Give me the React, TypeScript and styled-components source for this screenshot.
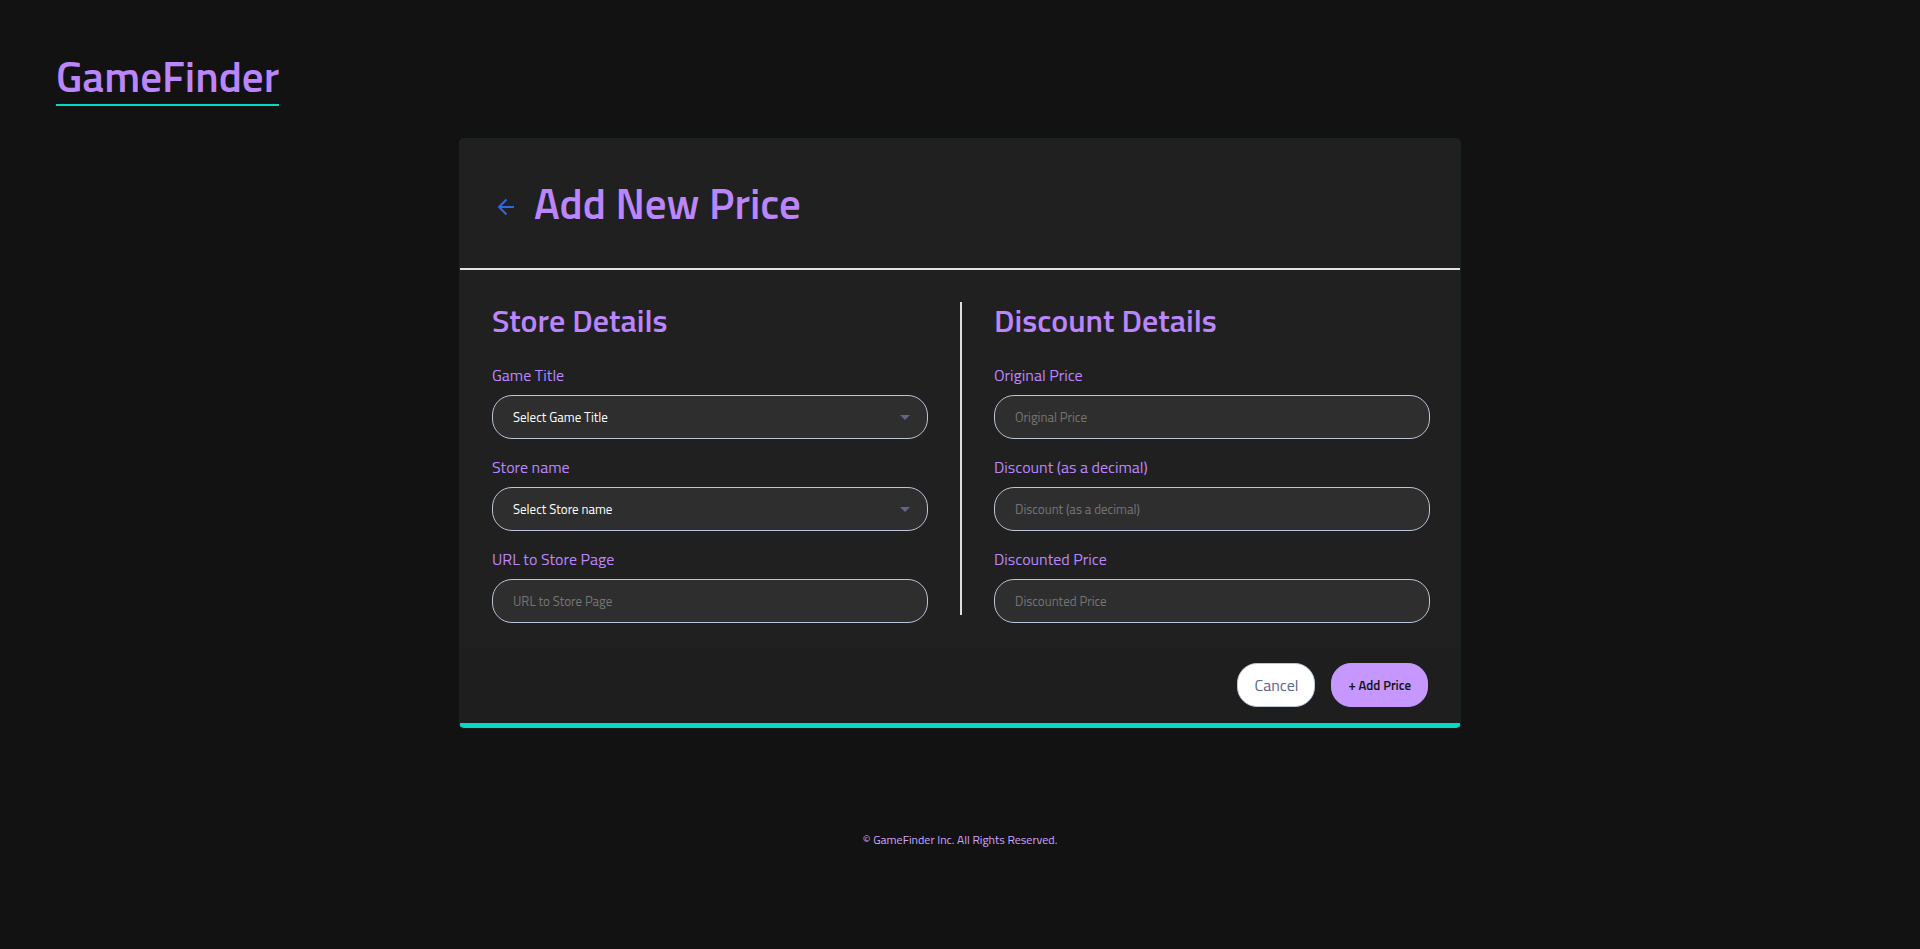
import React, { useId } from "react";
import styled, { createGlobalStyle } from "styled-components";

const GlobalStyle = createGlobalStyle`
  *, *::before, *::after { box-sizing: border-box; }
  body {
    margin: 0;
    background: #121212;
    color: #bb86fc;
    font-family: "Titillium Web", Roboto, sans-serif;
  }
  h1, h2, p { margin: 0; }
  button, input, select { font-family: inherit; }
`;

const Page = styled.div`
  display: flex;
  flex-direction: column;
  min-height: 100vh;
  padding: 48px 56px 0;
`;

const Brand = styled.a`
  align-self: flex-start;
  border-bottom: 2px solid #03dac5;
  color: #bb86fc;
  font-size: 43px;
  font-weight: 600;
  line-height: 56px;
  text-decoration: none;
`;

const Card = styled.form`
  width: 100%;
  max-width: 1002px;
  margin: 32px auto 0;
  overflow: hidden;
  border: 1px solid #1a2424;
  border-bottom: 5px solid #03dac5;
  border-radius: 5px;
  background: #202020;
`;

const CardHeader = styled.header`
  display: flex;
  align-items: center;
  gap: 16px;
  padding: 33px 36px 34px;
  border-bottom: 2px solid #dde3e6;
`;

const BackLink = styled.a`
  display: flex;
  padding-top: 8px;
  color: #2f68e0;
`;

const CardTitle = styled.h1`
  font-size: 43px;
  font-weight: 600;
  line-height: 62px;
`;

const CardBody = styled.div`
  display: grid;
  grid-template-columns: 1fr 2px 1fr;
  column-gap: 32px;
  padding: 32px 30px 24px 32px;
`;

const Divider = styled.div`
  margin-bottom: 8px;
  background: #dddddd;
`;

const Column = styled.section`
  display: flex;
  flex-direction: column;
  min-width: 0;
`;

const SectionTitle = styled.h2`
  margin-bottom: 24px;
  font-size: 32px;
  font-weight: 600;
  line-height: 36px;
`;

const FieldGroup = styled.div`
  display: flex;
  flex-direction: column;
  gap: 15px;
`;

const FieldBox = styled.div`
  display: grid;
  grid-template-columns: minmax(0, 1fr);
  row-gap: 7px;
`;

const FieldLabel = styled.label`
  font-size: 16px;
  line-height: 26px;
`;

const TextInput = styled.input`
  width: 100%;
  height: 44px;
  padding: 0 20px;
  border: 1px solid #bbc4d8;
  border-radius: 20px;
  background: #2e2e2e;
  color: #ffffff;
  font-size: 13px;
  &::placeholder { color: #757575; opacity: 1; }
`;

const SelectWrap = styled.div`
  position: relative;
`;

const SelectInput = styled(TextInput).attrs({ as: "select" })`
  display: block;
  appearance: none;
`;

const Caret = styled.svg`
  position: absolute;
  top: 20px;
  right: 18px;
  pointer-events: none;
`;

const CardFooter = styled.footer`
  display: flex;
  justify-content: flex-end;
  gap: 16px;
  padding: 16px 32px;
  background: #1e1e1e;
`;

const Button = styled.button<{ $primary?: boolean }>`
  height: 44px;
  padding: 0 16px;
  border: 1px solid ${(p) => (p.$primary ? "#c597ff" : "#bbc4d8")};
  border-radius: 20px;
  background: ${(p) => (p.$primary ? "#c597ff" : "#ffffff")};
  color: ${(p) => (p.$primary ? "#121212" : "#5d658b")};
  font-size: ${(p) => (p.$primary ? "13px" : "16px")};
  font-weight: ${(p) => (p.$primary ? 600 : 400)};
`;

const PageFooter = styled.footer`
  margin-top: 100px;
  padding-bottom: 32px;
  color: #cfa6ff;
  font-size: 12px;
  line-height: 24px;
  text-align: center;
`;

function Field({ label, select }: { label: string; select?: boolean }) {
  const id = useId();
  return (
    <FieldBox>
      <FieldLabel htmlFor={id}>{label}</FieldLabel>
      {select ? (
        <SelectWrap>
          <SelectInput id={id}>
            <option>Select {label}</option>
          </SelectInput>
          <Caret width="10" height="5" viewBox="0 0 10 5" aria-hidden="true">
            <path d="M0 0H10L5 5Z" fill="#5d658b" />
          </Caret>
        </SelectWrap>
      ) : (
        <TextInput id={id} type="text" placeholder={label} />
      )}
    </FieldBox>
  );
}

export default function App() {
  return (
    <>
      <GlobalStyle />
      <Page>
        <Brand href="#">GameFinder</Brand>
        <Card onSubmit={(e: React.FormEvent) => e.preventDefault()}>
          <CardHeader>
            <BackLink href="#" aria-label="Back">
              <svg width="22" height="22" viewBox="0 0 22 22" fill="none" stroke="currentColor" strokeWidth="2">
                <path d="M18 11H3M10.5 3.5L3 11L10.5 18.5" />
              </svg>
            </BackLink>
            <CardTitle>Add New Price</CardTitle>
          </CardHeader>
          <CardBody>
            <Column>
              <SectionTitle>Store Details</SectionTitle>
              <FieldGroup>
                <Field label="Game Title" select />
                <Field label="Store name" select />
                <Field label="URL to Store Page" />
              </FieldGroup>
            </Column>
            <Divider />
            <Column>
              <SectionTitle>Discount Details</SectionTitle>
              <FieldGroup>
                <Field label="Original Price" />
                <Field label="Discount (as a decimal)" />
                <Field label="Discounted Price" />
              </FieldGroup>
            </Column>
          </CardBody>
          <CardFooter>
            <Button type="button">Cancel</Button>
            <Button type="submit" $primary>+ Add Price</Button>
          </CardFooter>
        </Card>
        <PageFooter>© GameFinder Inc. All Rights Reserved.</PageFooter>
      </Page>
    </>
  );
}
